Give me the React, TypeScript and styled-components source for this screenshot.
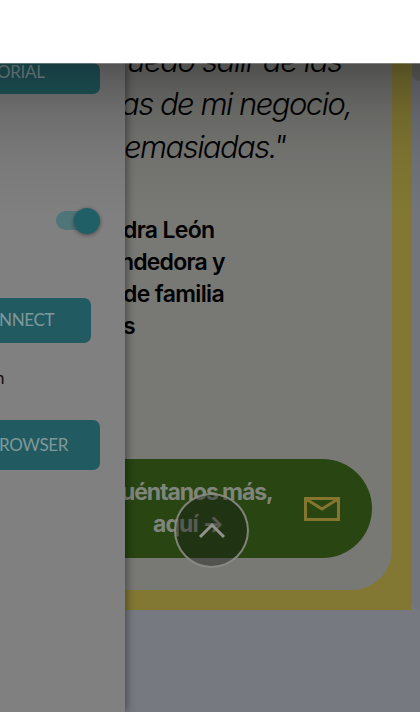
import React from 'react';
import styled, { createGlobalStyle } from 'styled-components';

const GlobalStyle = createGlobalStyle`
  *, *::before, *::after { box-sizing: border-box; }
  body { margin: 0; overflow: hidden; background: #767980; }
`;

const Page = styled.div`
  position: relative;
  width: 420px;
  height: 712px;
  overflow: hidden;
  display: flex;
  flex-direction: column;
  background: #767980;
  font-family: Inter, sans-serif;
`;

const Header = styled.header`
  flex: 0 0 63px;
  background: #fff;
`;

const Body = styled.div`
  position: relative;
  flex: 1;
  min-height: 0;
  display: flex;
  overflow: hidden;
`;

const HeaderShade = styled.div`
  position: absolute;
  inset: 0 0 auto 0;
  height: 150px;
  z-index: 5;
  pointer-events: none;
  border-top: 1px solid rgba(135, 135, 135, 0.6);
  background: linear-gradient(
    rgba(0, 0, 0, 0.35) 0,
    rgba(0, 0, 0, 0.25) 20px,
    rgba(0, 0, 0, 0.14) 50px,
    rgba(0, 0, 0, 0.06) 90px,
    transparent 150px
  );
`;

const Drawer = styled.aside`
  position: relative;
  z-index: 3;
  flex: 0 0 125px;
  background: #808080;
  box-shadow: 1px 0 9px rgba(0, 0, 0, 0.48);
`;

const DrawerButton = styled.div<{ $w: number; $h: number; $shift: number; $lift?: number }>`
  width: ${(p) => p.$w}px;
  height: ${(p) => p.$h}px;
  padding-bottom: ${(p) => p.$lift ?? 1}px;
  display: flex;
  align-items: center;
  overflow: hidden;
  border-radius: 0 7px 7px 0;
  background: #215b61;
  color: #80989a;
  font: 400 17px/18px Lato, sans-serif;
  white-space: nowrap;

  span { margin-left: ${(p) => p.$shift}px; letter-spacing: -0.35px; }
`;

const Toggle = styled.div`
  width: 42px;
  height: 19px;
  margin: 117px 0 68px 56px;
  padding-left: 18px;
  border-radius: 10px;
  display: flex;
  align-items: center;
  background: #507579;
`;

const ToggleThumb = styled.div`
  flex: 0 0 26px;
  height: 26px;
  border-radius: 50%;
  background: #215f66;
  box-shadow: 0 1px 4px rgba(0, 0, 0, 0.45);
`;

const DrawerLabel = styled.div`
  height: 77px;
  padding-top: 25px;
  margin-left: -5px;
  font: 400 17px/20px Lato, sans-serif;
  color: #101010;
`;

const Content = styled.main`
  position: relative;
  flex: 1;
  min-width: 0;
  display: flex;
  align-items: flex-start;
  overflow: hidden;
`;

const StoryFrame = styled.section`
  flex: 0 0 287px;
  height: 547px;
  padding: 0 20px 20px 0;
  background: #827834;
`;

const Story = styled.article`
  height: 527px;
  display: flex;
  flex-direction: column;
  align-items: flex-start;
  overflow: hidden;
  border-radius: 0 0 40px 0;
  background: #787875;
  color: #000;
`;

const Quote = styled.blockquote`
  margin: -24px 0 0;
  font: italic 300 31px/43px Inter, sans-serif;
`;

const Line = styled.div<{ $x: number; $track?: number }>`
  margin-left: ${(p) => p.$x}px;
  letter-spacing: ${(p) => p.$track ?? 0}px;
  white-space: nowrap;
`;

const Author = styled.div`
  margin-top: 46px;
  font: 600 23px/32px Inter, sans-serif;
`;

const ContactButton = styled.div`
  width: 247px;
  height: 99px;
  margin-top: 117px;
  padding-right: 32px;
  display: flex;
  align-items: center;
  justify-content: space-between;
  border-radius: 0 50px 50px 0;
  background: #284512;
`;

const ContactText = styled.div`
  margin-top: -1px;
  color: #80857c;
  font: 700 23px/32px Inter, sans-serif;
`;

const NextColumn = styled.section`
  flex: 1;
  height: 547px;
  background: #73757d;
  border-radius: 0 0 0 8px;
`;

const NextPicture = styled.div`
  height: 18px;
  background: #686866;
  border-radius: 0 0 0 9px;
`;

const ScrollTop = styled.div`
  position: absolute;
  left: 49px;
  top: 430px;
  width: 75px;
  height: 75px;
  border: 2px solid rgba(146, 146, 140, 0.85);
  border-radius: 50%;
  background: rgba(20, 24, 18, 0.38);
  display: flex;
  align-items: center;
  justify-content: center;
`;

export default function App() {
  return (
    <>
      <GlobalStyle />
      <Page>
        <Header />
        <Body>
          <HeaderShade />
          <Drawer>
            <DrawerButton $w={100} $h={31} $shift={-3} $lift={14}><span>ORIAL</span></DrawerButton>
            <Toggle><ToggleThumb /></Toggle>
            <DrawerButton $w={91} $h={45} $shift={-1}><span>NNECT</span></DrawerButton>
            <DrawerLabel>n</DrawerLabel>
            <DrawerButton $w={100} $h={50} $shift={-1}><span>ROWSER</span></DrawerButton>
          </Drawer>
          <Content>
            <StoryFrame>
              <Story>
                <Quote>
                  <Line $x={2} $track={-1.35}>uedo salir de las</Line>
                  <Line $x={-4} $track={-1.5}>as de mi negocio,</Line>
                  <Line $x={-1} $track={-1.55}>emasiadas."</Line>
                </Quote>
                <Author>
                  <Line $x={-2} $track={-0.7}>dra León</Line>
                  <Line $x={-5} $track={-0.8}>ndedora y</Line>
                  <Line $x={-2} $track={-0.65}>de familia</Line>
                  <Line $x={-2}>s</Line>
                </Author>
                <ContactButton>
                  <ContactText>
                    <Line $x={-4} $track={-1.1}>uéntanos más,</Line>
                    <Line $x={28} $track={-0.9}>aquí →</Line>
                  </ContactText>
                  <svg width="36" height="24" viewBox="0 0 36 24" fill="none" stroke="#85762f" strokeWidth="3">
                    <path d="M1.5 1.5h33v21h-33zM2 2l16 10L34 2" />
                  </svg>
                </ContactButton>
              </Story>
            </StoryFrame>
            <NextColumn><NextPicture /></NextColumn>
            <ScrollTop>
              <svg width="28" height="17" viewBox="0 0 28 17" fill="none" stroke="#92928c" strokeWidth="3">
                <path d="M2 15L14 3l12 12" />
              </svg>
            </ScrollTop>
          </Content>
        </Body>
      </Page>
    </>
  );
}
